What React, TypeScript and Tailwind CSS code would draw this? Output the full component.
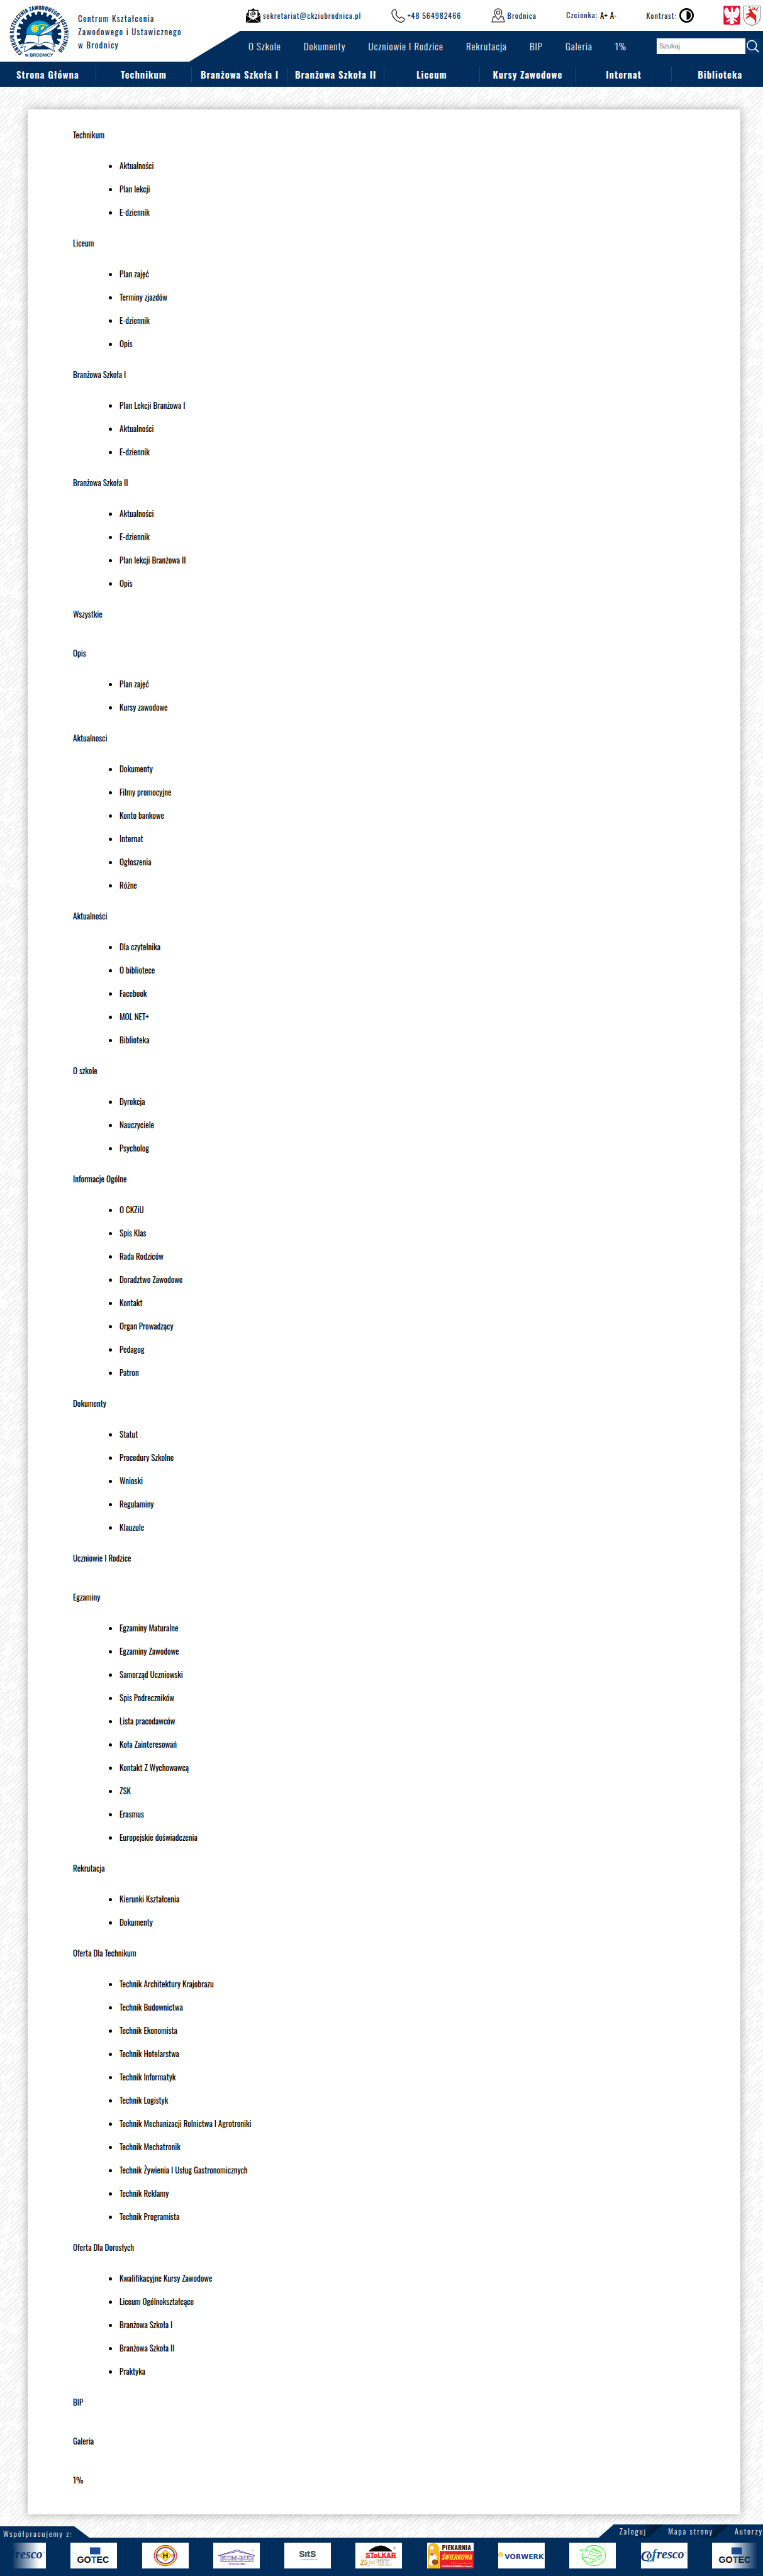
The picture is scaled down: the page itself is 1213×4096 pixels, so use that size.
import type { ReactNode } from "react";

type Section = { title: string; items: string[] };

const sections: Section[] = [
  { title: "Technikum", items: ["Aktualności", "Plan lekcji", "E-dziennik"] },
  { title: "Liceum", items: ["Plan zajęć", "Terminy zjazdów", "E-dziennik", "Opis"] },
  { title: "Branżowa Szkoła I", items: ["Plan Lekcji Branżowa I", "Aktualności", "E-dziennik"] },
  { title: "Branżowa Szkoła II", items: ["Aktualności", "E-dziennik", "Plan lekcji Branżowa II", "Opis"] },
  { title: "Wszystkie", items: [] },
  { title: "Opis", items: ["Plan zajęć", "Kursy zawodowe"] },
  { title: "Aktualnosci", items: ["Dokumenty", "Filmy promocyjne", "Konto bankowe", "Internat", "Ogłoszenia", "Różne"] },
  { title: "Aktualności", items: ["Dla czytelnika", "O bibliotece", "Facebook", "MOL NET+", "Biblioteka"] },
  { title: "O szkole", items: ["Dyrekcja", "Nauczyciele", "Psycholog"] },
  {
    title: "Informacje Ogólne",
    items: ["O CKZiU", "Spis Klas", "Rada Rodziców", "Doradztwo Zawodowe", "Kontakt", "Organ Prowadzący", "Pedagog", "Patron"],
  },
  { title: "Dokumenty", items: ["Statut", "Procedury Szkolne", "Wnioski", "Regulaminy", "Klauzule"] },
  { title: "Uczniowie I Rodzice", items: [] },
  {
    title: "Egzaminy",
    items: [
      "Egzaminy Maturalne",
      "Egzaminy Zawodowe",
      "Samorząd Uczniowski",
      "Spis Podreczników",
      "Lista pracodawców",
      "Koła Zainteresowań",
      "Kontakt Z Wychowawcą",
      "ZSK",
      "Erasmus",
      "Europejskie doświadczenia",
    ],
  },
  { title: "Rekrutacja", items: ["Kierunki Kształcenia", "Dokumenty"] },
  {
    title: "Oferta Dla Technikum",
    items: [
      "Technik Architektury Krajobrazu",
      "Technik Budownictwa",
      "Technik Ekonomista",
      "Technik Hotelarstwa",
      "Technik Informatyk",
      "Technik Logistyk",
      "Technik Mechanizacji Rolnictwa I Agrotroniki",
      "Technik Mechatronik",
      "Technik Żywienia I Usług Gastronomicznych",
      "Technik Reklamy",
      "Technik Programista",
    ],
  },
  {
    title: "Oferta Dla Dorosłych",
    items: ["Kwalifikacyjne Kursy Zawodowe", "Liceum Ogólnokształcące", "Branżowa Szkoła I", "Branżowa Szkoła II", "Praktyka"],
  },
  { title: "BIP", items: [] },
  { title: "Galeria", items: [] },
  { title: "1%", items: [] },
];

const topMenu = ["O Szkole", "Dokumenty", "Uczniowie I Rodzice", "Rekrutacja", "BIP", "Galeria", "1%"];
const mainMenu = [
  "Strona Główna",
  "Technikum",
  "Branżowa Szkoła I",
  "Branżowa Szkoła II",
  "Liceum",
  "Kursy Zawodowe",
  "Internat",
  "Biblioteka",
];

const gearTeeth = Array.from({ length: 22 }, (_, i) => (i * 360) / 22).filter((a) => a < 130 || a > 230);

function SchoolLogo() {
  return (
    <svg viewBox="0 0 540 450" className="h-[98px] w-[118px] shrink-0" role="img" aria-label="Logo CKZiU w Brodnicy">
      <defs>
        <path id="logo-ring" d="M132 384 A184 178 0 1 1 374 382" />
        <clipPath id="logo-base">
          <rect x="0" y="0" width="540" height="360" />
        </clipPath>
      </defs>
      <g fill="#022e5d">
        <text fontSize="38" fontFamily="Oswald, sans-serif" fontWeight="700">
          <textPath href="#logo-ring" startOffset="0">
            CENTRUM KSZTAŁCENIA ZAWODOWEGO I USTAWICZNEGO
          </textPath>
        </text>
        <text x="252" y="413" fontSize="32" textAnchor="middle" fontFamily="Liberation Sans, sans-serif" fontWeight="700">
          w BRODNICY
        </text>
      </g>
      <g fill="#022e5d" clipPath="url(#logo-base)">
        <circle cx="252" cy="245" r="138" />
        {gearTeeth.map((a) => (
          <path key={a} d="M236 120 L240 85 H264 L268 120 Z" transform={`rotate(${a} 252 248)`} />
        ))}
      </g>
      <circle cx="254" cy="244" r="95" fill="#009ee3" />
      <g stroke="#ffed00" strokeWidth="10" strokeLinecap="round">
        {[0, 36, 72, 108, 144, 180, 216, 252, 288, 324].map((a) => (
          <path key={a} d="M221 196 V182" transform={`rotate(${a} 221 208)`} />
        ))}
      </g>
      <circle cx="221" cy="208" r="9" fill="#f9b233" />
      <path d="M240 190 Q275 168 314 190" fill="none" stroke="#ffed00" strokeWidth="7" />
      <path d="M264 218 Q260 196 290 188 Q294 212 264 218 Z" fill="#ffed00" />
      <g fill="#fff" stroke="#022e5d" strokeWidth="4" strokeLinejoin="round">
        <path d="M140 318 L116 350 L152 338 L142 380 L215 336 Q235 328 242 340 H262 Q275 326 290 334 L366 378 L352 334 L372 342 L352 300 Z" />
        <path d="M158 256 Q210 246 250 262 Q292 248 342 256 L364 328 Q300 292 262 322 Q250 334 240 322 Q200 296 140 318 Z" />
        <path d="M428 138 L404 162 Q340 178 300 214 Q266 236 244 258 Q286 254 318 238 Q384 206 404 162" />
      </g>
      <path d="M158 376 L232 324 M270 324 L350 362 M250 264 V318" stroke="#022e5d" strokeWidth="3" fill="none" />
      <path d="M250 254 L404 162" stroke="#022e5d" strokeWidth="3" />
    </svg>
  );
}

function MailIcon() {
  return (
    <svg viewBox="0 0 35 35" className="size-[23px]" aria-hidden="true">
      <path d="M17.500 0 L22 4 H30 V10 L35 15 V35 H0 V15 L5 10 V4 H13 Z" fill="#000" />
      <path d="M7 6 H28 V20 L17.500 29 L7 20 Z" fill="#fff" />
      <path d="M0 16 L12 25 M35 16 L23 25 M1 35 L14 26 M34 35 L21 26" stroke="#fff" strokeWidth="1.500" />
      <circle cx="17.500" cy="14" r="2.600" fill="none" stroke="#000" strokeWidth="1.600" />
      <path d="M20.200 11 V15 Q22 18 23.500 14 A6 6 0 1 0 20 20" fill="none" stroke="#000" strokeWidth="1.500" />
    </svg>
  );
}

function PhoneIcon() {
  return (
    <svg viewBox="0 0 34 34" className="size-[22px]" fill="none" stroke="#111" strokeWidth="1.900" strokeLinejoin="round" aria-hidden="true">
      <path d="M8 1.500 Q3 3 1.500 8 Q1 18 10 26 Q17 33 26 33 Q31 31 32.500 27 Q33 25 31 23.500 L26 20.500 Q24 19.500 22.500 21.500 L20.500 23.500 Q14 20 11 13 L13 11 Q14 10 13 8 L10.500 2.500 Q9.500 1 8 1.500 Z" />
    </svg>
  );
}

function PinIcon() {
  return (
    <svg viewBox="0 0 34 35" className="h-[23px] w-[22px]" fill="none" stroke="#333" strokeWidth="2" strokeLinejoin="round" aria-hidden="true">
      <path d="M10 21 H5 L1.500 33.500 H32.500 L29 21 H24" />
      <path d="M17 28 Q8 17 8 10 A9 9 0 0 1 26 10 Q26 17 17 28 Z" />
      <circle cx="17" cy="10.500" r="4" />
    </svg>
  );
}

function EagleCoat() {
  return (
    <svg viewBox="0 0 126 150" className="h-8 w-[27px]" role="img" aria-label="Godło Polski">
      <path d="M1 1 H125 V130 Q125 142 112 142 H76 L63 149 L50 142 H14 Q1 142 1 130 Z" fill="#dc143c" />
      <path
        d="M59 18 Q70 14 73 24 Q76 34 70 44 Q76 50 82 44 Q88 20 104 12 Q108 22 118 26 Q122 48 116 66 Q110 86 92 96 Q84 90 78 84 L80 96 Q98 108 106 118 Q100 126 88 116 L74 106 L82 128 Q72 138 63 140 Q54 138 46 128 L52 106 L38 118 Q26 126 20 118 Q32 106 46 96 L50 84 Q42 92 34 96 Q16 86 10 66 Q4 46 8 26 Q18 22 24 12 Q38 22 44 44 Q50 50 56 44 Q52 30 59 18 Z"
        fill="#fff"
      />
      <path d="M20 34 L42 72 M12 50 L38 82 M106 34 L84 72 M114 50 L88 82 M63 50 V96 M55 60 V92 M71 60 V92" stroke="#e9a6b2" strokeWidth="2" />
      <path d="M54 8 L59 13 L63 6 L67 13 L72 8 L70 20 H56 Z" fill="#f2b233" />
      <path d="M26 118 L36 112 M100 118 L90 112 M52 24 L60 27" stroke="#f2b233" strokeWidth="5" />
    </svg>
  );
}

function DeerCoat() {
  return (
    <svg viewBox="0 0 126 150" className="h-8 w-[27px]" role="img" aria-label="Herb Brodnicy">
      <path d="M2 2 H124 V92 Q122 138 63 148 Q4 138 2 92 Z" fill="#fafafa" stroke="#222" strokeWidth="3" />
      <path
        d="M40 26 L58 28 L66 44 Q72 56 86 64 Q98 74 94 88 Q92 98 96 108 L90 132 L82 132 L86 112 L72 96 Q56 90 50 80 L30 92 L24 100 L18 94 L26 82 L42 72 L28 66 L20 72 L16 64 L28 58 L44 58 L46 40 L38 36 Z"
        fill="#da251d"
      />
      <path d="M54 28 Q44 20 46 8 M46 16 L38 10 M58 28 Q84 34 106 24 M72 30 L68 14 M84 30 L80 12 M96 28 L110 12 M90 30 L104 42" fill="none" stroke="#da251d" strokeWidth="5" strokeLinecap="round" />
    </svg>
  );
}

const dashRows = [
  "22 7 0 6 34 8 12 7 0 8 30 7 12 7",
  "40 8 10 7 28 9 0 8 34 16",
  "8 7 26 9 0 6 0 8 42 9 24 21",
  "30 9 18 8 0 7 22 10 40 16",
  "0 8 36 7 14 9 30 8 0 7 26 15",
  "46 8 0 7 20 8 0 22 32 17",
  "16 8 32 10 8 7 0 9 44 8 10 8",
  "26 7 0 8 40 9 12 8 24 26",
  "0 7 0 9 30 8 36 7 0 8 38 17",
  "34 10 14 8 28 8 0 7 30 21",
  "20 8 38 7 0 9 10 8 36 24",
  "0 9 24 8 0 7 44 10 18 8 0 32",
];
const dashOffsets = [0, 52, 108, 24, 83, 131, 41, 97, 12, 66, 146, 30];

function DiagonalTexture() {
  return (
    <svg className="absolute inset-0 -z-10 h-full w-full" aria-hidden="true">
      <defs>
        <pattern id="diagonal-dashes" width="160" height="66" patternUnits="userSpaceOnUse" patternTransform="rotate(-44)">
          {dashRows.map((dash, i) => (
            <path
              key={i}
              d={`M-160 ${i * 5.5 + 2.5} H320`}
              stroke="#ededed"
              strokeWidth="2"
              strokeLinecap="round"
              strokeDasharray={dash}
              strokeDashoffset={dashOffsets[i]}
            />
          ))}
        </pattern>
      </defs>
      <rect width="100%" height="100%" fill="#fdfdfd" />
      <rect width="100%" height="100%" fill="url(#diagonal-dashes)" />
    </svg>
  );
}

function Partner({ name, children }: { name: string; children: ReactNode }) {
  return (
    <a href="#" className="block h-[41px] w-[74px] shrink-0 bg-white">
      <svg viewBox="0 0 340 186" preserveAspectRatio="none" className="h-full w-full" role="img" aria-label={name}>
        {children}
      </svg>
    </a>
  );
}

function Cofresco() {
  return (
    <Partner name="Cofresco">
      <path d="M98 80 L84 118 Q74 140 34 130" fill="none" stroke="#1b8f8a" strokeWidth="8" />
      <g fontFamily="Liberation Serif, serif" fontStyle="italic" fontWeight="700" fill="#17377f">
        <text x="-2" y="130" fontSize="104">C</text>
        <text x="40" y="114" fontSize="80">o</text>
        <text x="82" y="114" fontSize="92" fill="#1f6f95">f</text>
        <text x="116" y="114" fontSize="92">resco</text>
      </g>
      <text x="318" y="76" fontSize="20" fontFamily="Liberation Sans, sans-serif" fill="#17377f">®</text>
    </Partner>
  );
}

function Gotec() {
  return (
    <Partner name="Gotec">
      <rect x="142" y="34" width="76" height="50" fill="#1f4e95" />
      <text x="165" y="143" textAnchor="middle" fontSize="66" fontWeight="700" fontFamily="Liberation Sans, sans-serif" fill="#111">
        GO<tspan fill="#1f4e95">T</tspan>EC
      </text>
    </Partner>
  );
}

function Partners() {
  return (
    <div className="relative overflow-hidden">
      <div className="-ml-px mr-[7px] flex justify-between">
        <Cofresco />
        <Gotec />
        <Partner name="Hydro">
          <ellipse cx="170" cy="93" rx="82" ry="73" fill="#fff" stroke="#e8363a" strokeWidth="6" />
          <ellipse cx="170" cy="93" rx="75" ry="66" fill="none" stroke="#f3c92c" strokeWidth="8" />
          <ellipse cx="170" cy="93" rx="65" ry="57" fill="none" stroke="#40408f" strokeWidth="8" />
          <path d="M170 52 L206 86 H228 V98 H206 L170 134 L134 98 H112 V86 H134 Z" fill="#fcee21" stroke="#e8363a" strokeWidth="4" />
          <path d="M160 74 Q152 92 160 112 M180 74 Q188 92 180 112 M156 93 H184" fill="none" stroke="#22225a" strokeWidth="8" />
        </Partner>
        <Partner name="Kom-Bud">
          <path d="M38 94 L175 52 L302 94 M56 96 V136 H290 V96 M56 88 L175 64 L290 88 M38 94 H56 M290 94 H302" fill="none" stroke="#4b2f8f" strokeWidth="4" />
          <text x="174" y="128" textAnchor="middle" fontSize="46" fontWeight="700" fontFamily="Liberation Serif, serif" fill="#fff" stroke="#4b2f8f" strokeWidth="2">
            KOM-BUD
          </text>
          <text x="176" y="158" textAnchor="middle" fontSize="17" fontWeight="700" fontFamily="Liberation Sans, sans-serif" fill="#4b2f8f">
            Firma od 1951r.
          </text>
          <text x="280" y="64" fontSize="18" fontFamily="Liberation Sans, sans-serif" fill="#4b2f8f">®</text>
        </Partner>
        <Partner name="Sits">
          <text x="169" y="105" textAnchor="middle" fontSize="62" fontWeight="800" fontFamily="Inter, sans-serif" fill="#46524f">
            SıtS
          </text>
          <text x="170" y="129" textAnchor="middle" fontSize="18" fontStyle="italic" fontFamily="Liberation Sans, sans-serif" fill="#7b8583">
            — comfortable life
          </text>
        </Partner>
        <Partner name="Stolkar">
          <path d="M98 64 L104 52 L110 54 L114 42 L122 44 L128 34 L136 36 L144 27 L152 30 L160 22 L168 26 L176 20 L184 22 L192 20 L200 24 L208 22 L216 28 L224 28 L232 36 L240 36 L246 44 L254 46 L258 54 L264 56 L270 64 Z" fill="#0a0a0a" />
          <text x="186" y="108" textAnchor="middle" fontSize="48" fontWeight="900" fontFamily="Liberation Sans, sans-serif" fill="#f01c1c" stroke="#f01c1c" strokeWidth="2">
            SToLKAR
          </text>
          <path d="M74 108 H142 M182 108 H298" stroke="#f01c1c" strokeWidth="4" />
          <text x="36" y="158" fontSize="54" fontStyle="italic" fontFamily="Liberation Serif, serif" fontWeight="700" fill="#b98d2c">25</text>
          <text x="98" y="156" fontSize="44" fontStyle="italic" fontFamily="Liberation Serif, serif" fill="#d2ac4c">lat</text>
          <path d="M38 164 Q80 156 106 166" stroke="#b98d2c" strokeWidth="3" fill="none" />
          <g fontFamily="DejaVu Sans, sans-serif" fontWeight="700" fill="#a3a3a3" fontSize="18">
            <text x="154" y="130">FABRYKA</text>
            <text x="154" y="146">M E B L I</text>
          </g>
          <text x="164" y="167" fontSize="23" fontWeight="700" fontFamily="Liberation Serif, serif" fill="#d8b765">1989-2014</text>
          <text x="276" y="48" fontSize="24" fontFamily="Liberation Sans, sans-serif" fill="#333">®</text>
        </Partner>
        <Partner name="Piekarnia Świerkowa">
          <path d="M4 186 V44 Q8 4 46 3 Q84 4 88 44 V186 Z" fill="#f9b916" />
          <path d="M12 146 Q14 94 34 84 L54 82 Q74 96 74 130 L70 160 L20 166 Z" fill="#fff" />
          <path d="M22 40 Q22 20 36 24 Q50 22 48 40 L44 54 H26 Z" fill="#fff" />
          <ellipse cx="35" cy="64" rx="12" ry="16" fill="#e9b48a" />
          <path d="M24 78 L48 80 L36 96 Z" fill="#d8232a" />
          <ellipse cx="58" cy="140" rx="24" ry="20" fill="#9c4a18" />
          <rect x="92" y="60" width="248" height="126" fill="#e8202a" />
          <text x="215" y="53" textAnchor="middle" fontSize="48" fontWeight="700" fontFamily="Oswald, sans-serif" fill="#231f20">
            PIEKARNIA
          </text>
          <text x="215" y="122" textAnchor="middle" fontSize="46" fontStyle="italic" fontWeight="600" fontFamily="Oswald, sans-serif" fill="#ffe92b">
            ŚWIERKOWA
          </text>
          <text x="252" y="156" textAnchor="middle" fontSize="22" fontStyle="italic" fontFamily="Liberation Serif, serif" fill="#f9b916">
            M. Lewandowska
          </text>
          <text x="215" y="176" textAnchor="middle" fontSize="11" fontWeight="600" fontFamily="Oswald, sans-serif" fill="#fff">
            ● 56-498-24-66 87-300 BRODNICA, ul. Świerkowa 2
          </text>
        </Partner>
        <Partner name="Vorwerk">
          <circle cx="17" cy="86" r="17" fill="#f6b828" />
          <path d="M9 76 L17 96 L25 76" fill="none" stroke="#fff" strokeWidth="5" />
          <text x="190" y="118" textAnchor="middle" fontSize="50" fontWeight="700" fontFamily="DejaVu Sans, sans-serif" fill="#1d3f86">
            VORWERK
          </text>
        </Partner>
        <Partner name="WOK">
          <ellipse cx="180" cy="93" rx="84" ry="73" fill="none" stroke="#2df52d" strokeWidth="5" />
          <rect x="70" y="42" width="82" height="28" fill="#fff" />
          <path d="M88 112 L124 106 L150 84 L150 60 L170 48 L226 66 L238 92 L228 114 L166 142 L136 140 L88 112 M124 106 L180 122 L166 142 M150 60 L210 84 L226 66 M150 84 L200 98 L238 92 M168 36 L188 60 L222 62 L168 36 M180 122 L228 92" fill="none" stroke="#2df52d" strokeWidth="4" />
          <text x="74" y="65" fontSize="27" fontWeight="700" fontFamily="Liberation Serif, serif" fill="#2df52d">WOK</text>
        </Partner>
        <Cofresco />
        <Gotec />
      </div>
      <div className="absolute inset-y-0 left-0 w-[62px] bg-linear-to-r from-[#022e5d] from-30% to-transparent" />
      <div className="absolute inset-y-0 right-0 w-[51px] bg-linear-to-l from-[#022e5d] from-18% to-transparent" />
    </div>
  );
}

export default function App() {
  return (
    <div className="font-['Oswald',sans-serif] text-[13px] font-normal text-black">
      <header>
        <div className="flex bg-white">
          <a href="#" className="flex w-[301px] shrink-0 items-start pl-[7px] text-[#022e5d]">
            <SchoolLogo />
            <span className="-ml-px pt-[19px] leading-[21px] tracking-widest whitespace-nowrap">
              Centrum Kształcenia
              <br />
              Zawodowego i Ustawicznego
              <br />w Brodnicy
            </span>
          </a>
          <div className="min-w-0 flex-1">
            <div className="flex h-[49px] items-center justify-between pr-1 pl-[90px] text-xs tracking-[1px] whitespace-nowrap text-[#022e5d]">
              <a href="#" className="flex items-center gap-1">
                <MailIcon />
                sekretariat@ckziubrodnica.pl
              </a>
              <a href="#" className="flex items-center gap-1">
                <PhoneIcon />
                +48 564982466
              </a>
              <a href="#" className="flex items-center gap-1">
                <PinIcon />
                Brodnica
              </a>
              <div className="flex items-center gap-1">
                Czcionka:
                <button type="button" className="text-[13px] tracking-normal text-black">A+</button>
                <button type="button" className="text-[13px] tracking-normal text-black">A-</button>
              </div>
              <div className="flex items-center gap-1">
                Kontrast:
                <button type="button" aria-label="Zmień kontrast">
                  <svg viewBox="0 0 35 35" className="size-[23px]">
                    <circle cx="17.500" cy="17.500" r="15.500" fill="#fff" stroke="#000" strokeWidth="4" />
                    <path d="M17.500 7 A10.500 10.500 0 0 1 17.500 28 Z" fill="#000" />
                  </svg>
                </button>
              </div>
              <div className="flex gap-[5px]">
                <EagleCoat />
                <DeerCoat />
              </div>
            </div>
            <div className="flex h-[49px] items-center bg-[#022e5d] pr-1 pl-[94px] [clip-path:polygon(81px_0,100%_0,100%_100%,0_100%)]">
              <nav className="flex gap-9 text-[15px] font-light tracking-[1px] whitespace-nowrap text-white">
                {topMenu.map((label) => (
                  <a key={label} href="#">
                    {label}
                  </a>
                ))}
              </nav>
              <form className="ml-auto flex h-[25px]">
                <input
                  type="search"
                  aria-label="Szukaj"
                  placeholder="Szukaj"
                  className="w-[141px] bg-white px-1 font-['Liberation_Sans',sans-serif] text-[11px] placeholder:text-[#757575]"
                />
                <button type="submit" aria-label="Wyszukaj" className="w-6 bg-[#00376f]">
                  <svg viewBox="0 0 110 110" className="h-full w-full" fill="none" stroke="#fff" strokeWidth="7">
                    <circle cx="47" cy="48" r="34" />
                    <path d="M70 72 L98 98" strokeWidth="9" />
                  </svg>
                </button>
              </form>
            </div>
          </div>
        </div>
        <div className="overflow-hidden bg-[#022e5d]">
          <nav className="-mr-2 grid h-10 grid-cols-8 items-center divide-x divide-[#0a4a94] text-[15px] font-semibold tracking-[1px] whitespace-nowrap text-white">
            {mainMenu.map((label) => (
              <a key={label} href="#" className="flex h-6 items-center justify-center">
                {label}
              </a>
            ))}
          </nav>
        </div>
      </header>

      <div className="relative isolate">
        <DiagonalTexture />
        <div className="pt-9">
          <main className="mr-9 ml-11 bg-white pt-[27px] pb-[6px] pl-[72px] shadow-[0_0_14px_rgba(0,0,0,0.35)]">
            {sections.map(({ title, items }) => (
              <section key={title}>
                <h2 className="leading-[27px]">
                  <a href="#">{title}</a>
                </h2>
                {items.length > 0 ? (
                  <ul className="list-disc py-[17px] pl-[74px] leading-[37px]">
                    {items.map((item) => (
                      <li key={item}>
                        <a href="#">{item}</a>
                      </li>
                    ))}
                  </ul>
                ) : (
                  <div className="h-[35px]" />
                )}
              </section>
            ))}
          </main>
        </div>
        <div className="mt-4 flex h-[21px] items-end justify-between text-xs font-light tracking-[2px] whitespace-nowrap text-white">
          <h2 className="relative z-10 h-[18px] w-[142px] bg-[#022e5d] pt-[2px] pl-[5px] leading-5 [clip-path:polygon(0_0,118px_0,142px_100%,142px_200%,0_200%)]">
            Współpracujemy z:
          </h2>
          <nav className="flex h-[21px] bg-[#022e5d] leading-[21px] [clip-path:polygon(24px_0,100%_0,100%_100%,0_100%)]">
            <a
              href="#"
              className="bg-[linear-gradient(135deg,#022e5d_calc(100%_-_38px),#011a36_calc(100%_-_16px))] pr-[26px] pl-[33px] [clip-path:polygon(24px_0,100%_0,calc(100%_-_24px)_100%,0_100%)]"
            >
              Zaloguj
            </a>
            <a
              href="#"
              className="-ml-6 bg-[linear-gradient(135deg,#022e5d_calc(100%_-_38px),#011a36_calc(100%_-_16px))] pr-[26px] pl-8 [clip-path:polygon(24px_0,100%_0,calc(100%_-_24px)_100%,0_100%)]"
            >
              Mapa strony
            </a>
            <a href="#" className="-ml-6 bg-[#022e5d] pl-8 [clip-path:polygon(24px_0,100%_0,100%_100%,0_100%)]">
              Autorzy
            </a>
          </nav>
        </div>
      </div>

      <footer className="bg-[#022e5d] pt-2 pb-3">
        <Partners />
      </footer>
    </div>
  );
}
